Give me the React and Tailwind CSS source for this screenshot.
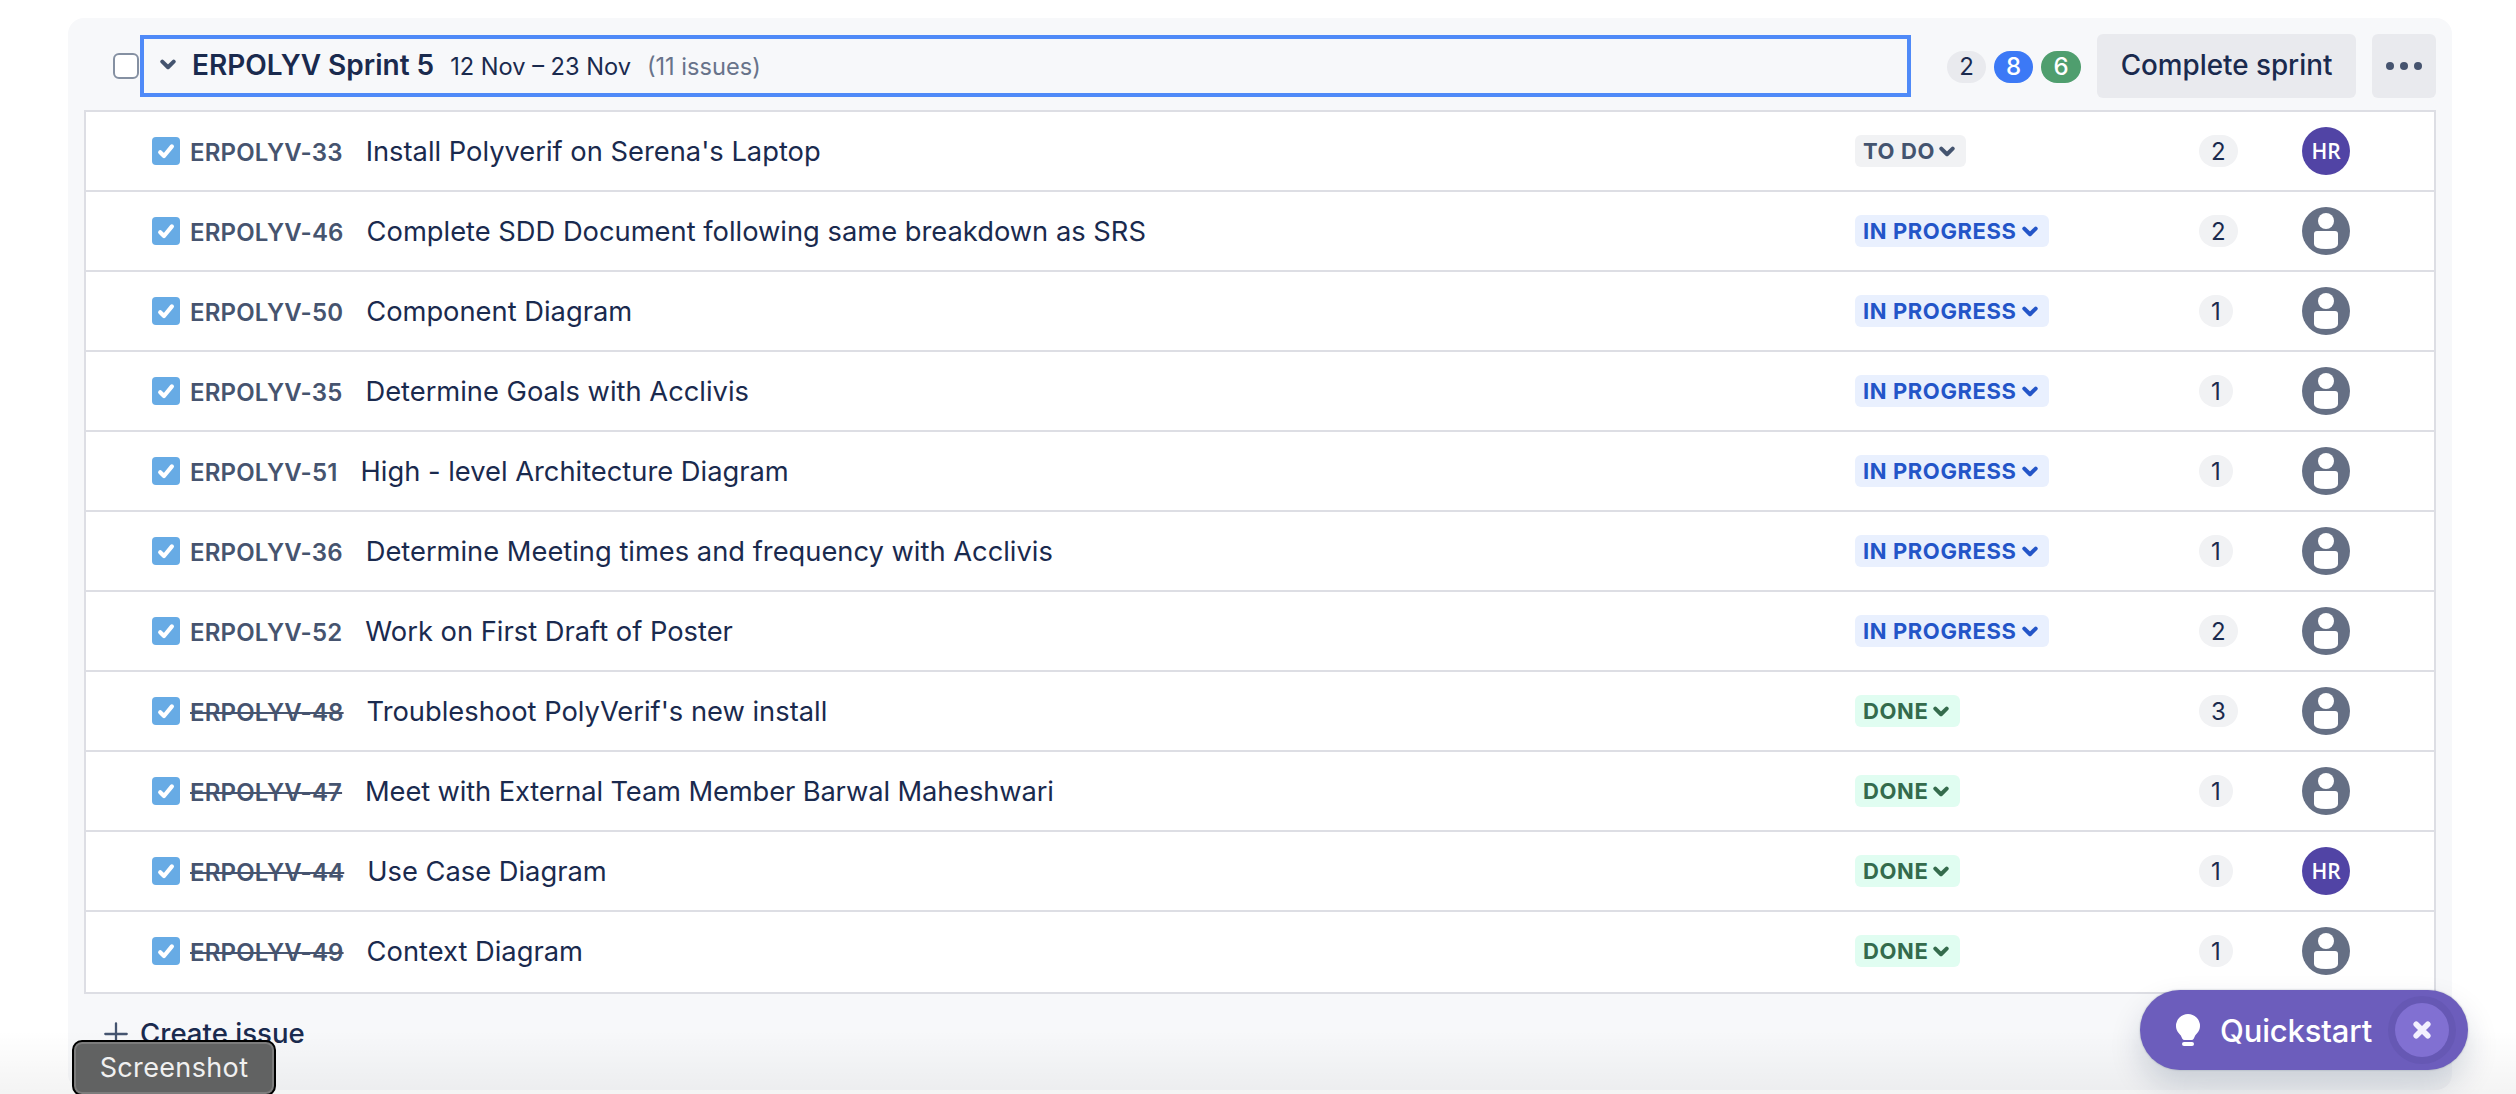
import React from 'react';

const issues = [
  { id: 'ERPOLYV-33', title: "Install Polyverif on Serena's Laptop", status: 'todo', points: 2, user: 'HR' },
  { id: 'ERPOLYV-46', title: 'Complete SDD Document following same breakdown as SRS', status: 'progress', points: 2 },
  { id: 'ERPOLYV-50', title: 'Component Diagram', status: 'progress', points: 1 },
  { id: 'ERPOLYV-35', title: 'Determine Goals with Acclivis', status: 'progress', points: 1 },
  { id: 'ERPOLYV-51', title: 'High - level Architecture Diagram', status: 'progress', points: 1 },
  { id: 'ERPOLYV-36', title: 'Determine Meeting times and frequency with Acclivis', status: 'progress', points: 1 },
  { id: 'ERPOLYV-52', title: 'Work on First Draft of Poster', status: 'progress', points: 2 },
  { id: 'ERPOLYV-48', title: "Troubleshoot PolyVerif's new install", status: 'done', points: 3 },
  { id: 'ERPOLYV-47', title: 'Meet with External Team Member Barwal Maheshwari', status: 'done', points: 1, tight: true },
  { id: 'ERPOLYV-44', title: 'Use Case Diagram', status: 'done', points: 1, user: 'HR' },
  { id: 'ERPOLYV-49', title: 'Context Diagram', status: 'done', points: 1 },
];

const statuses = {
  todo: { label: 'TO DO', className: 'w-[111px] bg-[#f1f2f4] text-[#44546f]' },
  progress: { label: 'IN PROGRESS', className: 'w-[194px] bg-[#e9f0fe] text-[#2355c8]' },
  done: { label: 'DONE', className: 'w-[105px] bg-[#e0fdf1] text-[#346b4c]' },
};

function Chevron({ className }) {
  return (
    <svg viewBox="0 0 16 11" className={className} fill="none" stroke="currentColor" strokeWidth="4" strokeLinecap="round" strokeLinejoin="round">
      <path d="M2.3 2.6 8 8.2l5.7-5.6" />
    </svg>
  );
}

function TaskIcon() {
  return (
    <svg viewBox="0 0 28 28" className="size-7 shrink-0">
      <rect width="28" height="28" rx="4" fill="#67abe5" />
      <path d="M8.2 15.2 12 19 19.9 9.4" fill="none" stroke="#fff" strokeWidth="4.2" strokeLinecap="round" strokeLinejoin="round" />
    </svg>
  );
}

function Avatar({ user }) {
  if (user) {
    return (
      <div className="flex size-12 items-center justify-center rounded-full bg-[#5144a5] font-['Open_Sans',sans-serif] text-[21px] leading-none font-semibold text-white">
        {user}
      </div>
    );
  }
  return (
    <svg viewBox="0 0 48 48" className="size-12">
      <circle cx="24" cy="24" r="24" fill="#656f84" />
      <circle cx="24" cy="14" r="8" fill="#fff" />
      <path d="M12 27q0-3 3-3h18q3 0 3 3v10q0 5-12 5t-12-5z" fill="#fff" />
    </svg>
  );
}

function IssueRow({ issue }) {
  const status = statuses[issue.status];
  return (
    <div className="flex h-20 items-center border-b-2 border-[#dddee4] bg-white pl-[66px] last:border-white">
      <TaskIcon />
      <div className="flex w-[1675px] items-baseline gap-[23px] pt-0.5 pl-[10px] whitespace-nowrap">
        <span className={`text-2xl leading-8 font-semibold tracking-[0.18px] text-[#46546f] ${issue.status === 'done' ? 'line-through decoration-2' : ''}`}>
          {issue.id}
        </span>
        <span className={`text-[27.3px] leading-8 ${issue.tight ? 'tracking-[-0.12px]' : ''}`}>{issue.title}</span>
      </div>
      <div className="w-[344px]">
        <div className={`flex h-8 items-center justify-between rounded-md pr-[11px] pl-[8px] text-[22px] font-bold tracking-[0.6px] whitespace-nowrap ${status.className}`}>
          {status.label}
          <Chevron className="w-4" />
        </div>
      </div>
      <div className="w-[103px]">
        <span className="inline-flex h-8 items-center rounded-full bg-[#f1f2f4] px-3 pt-px align-middle text-2xl">{issue.points}</span>
      </div>
      <Avatar user={issue.user} />
    </div>
  );
}

export default function App() {
  return (
    <div className="relative h-[1094px] w-[2516px] overflow-hidden bg-white pt-[18px] pl-[68px] font-['Inter',sans-serif] text-[#1a2a4e]">
      <section className="h-[1072px] w-[2384px] rounded-2xl bg-[#f7f8fa] px-4 pt-4">
        <header className="flex h-[76px] items-start pl-[29px]">
          <div className="mt-[19px] size-[26px] rounded-md border-2 border-[#8590a2] bg-white" />
          <div className="mt-px ml-px flex h-[62px] w-[1771px] items-center border-4 border-[#4f8af8] pl-4 whitespace-nowrap">
            <Chevron className="mb-1 w-4 text-[#44546f]" />
            <div className="flex items-baseline pl-4 text-[23.6px]">
              <h2 className="text-[28px] leading-9 font-semibold">ERPOLYV Sprint 5</h2>
              <span className="pl-4">12 Nov – 23 Nov</span>
              <span className="pl-4 text-[#68738a]">(11 issues)</span>
            </div>
          </div>
          <div className="mt-[17px] ml-9 flex gap-2 text-2xl leading-8">
            <span className="w-[39px] rounded-full bg-[#e9eaee] text-center">2</span>
            <span className="w-[39px] rounded-full bg-[#3c79f6] text-center font-medium text-white">8</span>
            <span className="w-10 rounded-full bg-[#4f9e6e] text-center font-medium text-white">6</span>
          </div>
          <button className="ml-4 h-16 w-[259px] rounded-md bg-[#e9eaee] text-[27.8px] font-medium whitespace-nowrap">Complete sprint</button>
          <button className="ml-4 flex h-16 w-16 items-center justify-center gap-[6px] rounded-md bg-[#e9eaee]">
            <i className="size-2 rounded-full bg-[#46546f]" />
            <i className="size-2 rounded-full bg-[#46546f]" />
            <i className="size-2 rounded-full bg-[#46546f]" />
          </button>
        </header>

        <div className="border-2 border-[#dddee4]">
          {issues.map((issue) => (
            <IssueRow key={issue.id} issue={issue} />
          ))}
        </div>

        <button className="mt-4 flex h-12 items-center gap-[12px] pl-5 text-[27.6px] font-medium whitespace-nowrap">
          <svg viewBox="0 0 24 24" className="size-6 text-[#44546f]" fill="none" stroke="currentColor" strokeWidth="2.300" strokeLinecap="round">
            <path d="M12 1.300v21.400M1.300 12h21.400" />
          </svg>
          Create issue
        </button>
      </section>

      <div className="absolute inset-x-0 bottom-0 h-[64px] bg-linear-to-b from-transparent to-black/[0.045]" />

      <div className="absolute top-[1040px] left-[72px] flex h-14 w-[204px] items-center justify-center rounded-[10px] border-2 border-black bg-[#616262] text-[27px] tracking-[0.35px] text-[#f0f0f0] inset-ring-2 inset-ring-[#7c7c7c]">
        Screenshot
      </div>

      <div className="absolute top-[990px] left-[2140px] flex h-20 w-[328px] items-center rounded-full bg-[#6c5dbc] pl-9 text-white shadow-[0_16px_32px_rgba(9,30,66,0.16),0_0_2px_rgba(9,30,66,0.3)]">
        <svg viewBox="0 0 24 32" className="h-8 w-6" fill="#fff">
          <path d="M12 0a12 12 0 0 1 12 12c0 4.500-2.500 7-4.800 9.500l-1.500 3.200Q17 26 15.500 26h-7q-1.500 0-2.200-1.300L4.800 21.500C2.500 19 0 16.500 0 12A12 12 0 0 1 12 0z" />
          <rect x="6" y="28" width="12" height="4" rx="2" />
        </svg>
        <span className="w-[174px] pt-0.5 pl-5 text-[31px] font-medium tracking-[-0.15px]">Quickstart</span>
        <span className="ml-[14px] flex size-[68px] items-center justify-center rounded-full bg-[#6658b4]">
          <span className="flex size-[54px] items-center justify-center rounded-full bg-[#8170d2]">
            <svg viewBox="0 0 18 18" className="size-[18px]" fill="none" stroke="#f3f0ff" strokeWidth="5.600" strokeLinecap="round">
              <path d="m3.200 3.200 11.600 11.600M14.800 3.200 3.200 14.800" />
            </svg>
          </span>
        </span>
      </div>
    </div>
  );
}
